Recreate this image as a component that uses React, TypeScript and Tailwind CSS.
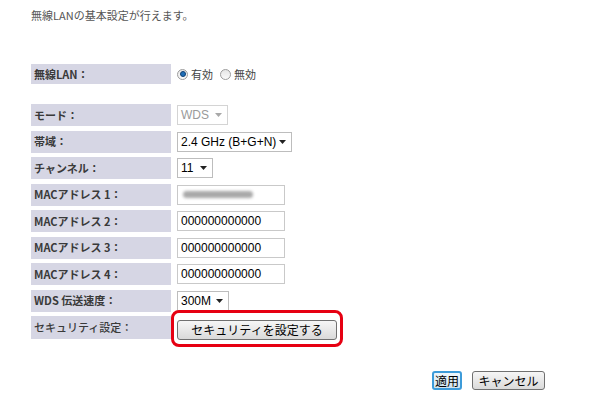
const jp = { fontFamily: '"Noto Sans CJK JP", "Noto Sans", sans-serif' };
const latin = { fontFamily: '"Liberation Sans", Arial, "Noto Sans CJK JP", sans-serif' };

function Label({ children, bold = true }: { children: React.ReactNode; bold?: boolean }) {
  return (
    <div
      className={`w-[140px] h-full bg-[#d6d6e4] flex items-center pl-[3px] text-[11px] text-[#3a3a3a] shrink-0 ${
        bold ? "font-bold" : "font-medium"
      }`}
      style={jp}
    >
      {children}
    </div>
  );
}

function Select({ value, width, disabled }: { value: string; width: string; disabled?: boolean }) {
  return (
    <div
      className={`${width} h-[20px] bg-white border flex items-center pl-[3px] pr-[5px] text-[12px] ${
        disabled ? "border-[#d4d4d4] text-[#9a9a9a]" : "border-[#bdbdbd] text-black"
      }`}
      style={latin}
    >
      <span className="whitespace-nowrap">{value}</span>
      <svg className="ml-auto shrink-0" width="7" height="4" viewBox="0 0 7 4">
        <path d="M0 0h7L3.5 4z" fill={disabled ? "#a8a8a8" : "#222"} />
      </svg>
    </div>
  );
}

function TextInput({ value, blurred }: { value?: string; blurred?: boolean }) {
  return (
    <div
      className="w-[108px] h-[20px] bg-white border border-[#c9c9c9] flex items-center px-[3px] text-[12px] text-black"
      style={latin}
    >
      {blurred ? <div className="w-[70px] h-[7px] ml-[2px] bg-[#a9a9a9] rounded-full blur-[1.5px]" /> : value}
    </div>
  );
}

function Row({ label, children }: { label: string; children: React.ReactNode }) {
  return (
    <div className="flex items-center h-[22px] gap-[6px]">
      <Label>{label}</Label>
      <div className="flex items-center">{children}</div>
    </div>
  );
}

function Radio({ checked }: { checked?: boolean }) {
  return (
    <div className="w-[11px] h-[11px] rounded-full border border-[#9c9c9c] bg-gradient-to-b from-[#e6e6e6] to-[#fafafa] flex items-center justify-center">
      {checked && <div className="w-[6px] h-[6px] rounded-full bg-[#1f6fb8] border border-[#0f3f73]" />}
    </div>
  );
}

export default function App() {
  return (
    <div className="w-[600px] h-[399px] bg-white relative overflow-hidden" style={jp}>
      <div className="pl-[31px] pt-[8px]">
        <p className="text-[11px] text-[#555] leading-[14px]">無線LANの基本設定が行えます。</p>

        <div className="mt-[42px] flex flex-col">
          <div className="flex items-center h-[20px] gap-[6px]">
            <Label>無線LAN：</Label>
            <div className="flex items-center text-[11px] text-[#444]">
              <Radio checked />
              <span className="ml-[3px]">有効</span>
              <div className="ml-[7px]">
                <Radio />
              </div>
              <span className="ml-[3px]">無効</span>
            </div>
          </div>

          <div className="mt-[20px] flex flex-col gap-[4.5px]">
            <Row label="モード：">
              <Select value="WDS" width="w-[51px]" disabled />
            </Row>
            <Row label="帯域：">
              <Select value="2.4 GHz (B+G+N)" width="w-[115px]" />
            </Row>
            <Row label="チャンネル：">
              <Select value="11" width="w-[36px]" />
            </Row>
            <Row label="MACアドレス 1：">
              <TextInput blurred />
            </Row>
            <Row label="MACアドレス 2：">
              <TextInput value="000000000000" />
            </Row>
            <Row label="MACアドレス 3：">
              <TextInput value="000000000000" />
            </Row>
            <Row label="MACアドレス 4：">
              <TextInput value="000000000000" />
            </Row>
            <Row label="WDS 伝送速度：">
              <Select value="300M" width="w-[52px]" />
            </Row>
            <div className="flex items-center h-[23px] gap-[6px]">
              <Label bold={false}>セキュリティ設定：</Label>
              <div className="relative">
                <button className="w-[160px] h-[20px] rounded-[3px] border border-[#707070] bg-gradient-to-b from-[#f6f6f6] to-[#dadada] text-[12px] text-black leading-none">
                  セキュリティを設定する
                </button>
                <div className="absolute -left-[6px] -top-[6px] -right-[6px] -bottom-[7px] border-[3px] border-[#e60012] rounded-[8px]" />
              </div>
            </div>
          </div>
        </div>

        <div className="mt-[32px] flex justify-end pr-[55px] gap-[10px]">
          <button className="w-[30px] h-[19px] rounded-[3px] border-2 border-[#3d9bd9] bg-gradient-to-b from-[#eef6fb] to-[#cfe3f0] text-[12px] text-black leading-none">
            適用
          </button>
          <button className="w-[73px] h-[19px] rounded-[3px] border border-[#707070] bg-gradient-to-b from-[#f6f6f6] to-[#dadada] text-[12px] text-black leading-none">
            キャンセル
          </button>
        </div>
      </div>
    </div>
  );
}
